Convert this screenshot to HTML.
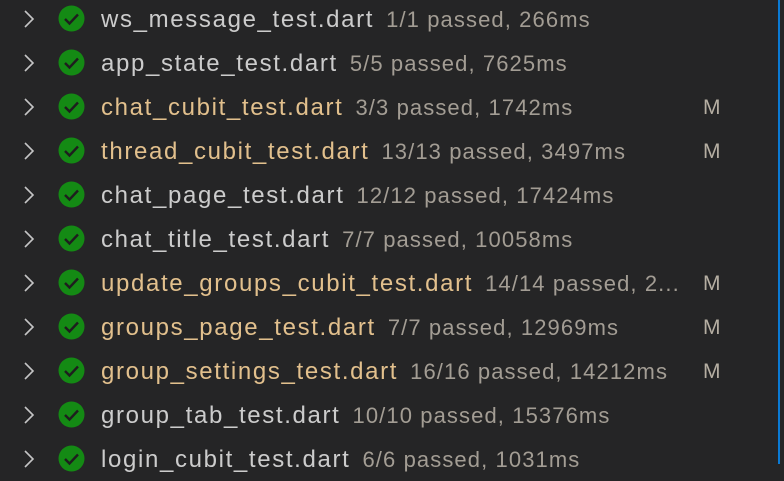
<!DOCTYPE html>
<html><head><style>
body{margin:0;width:784px;height:464px;background:#252526;overflow:hidden;font-family:"Liberation Sans",sans-serif;position:relative}
.r{position:absolute;left:0;width:778px;height:44px}
.chev{position:absolute;left:22px;top:12px}
.ic{position:absolute;left:58px;top:8px}
.t{position:absolute;left:101px;top:9px;font-size:24px;letter-spacing:1.65px;white-space:nowrap;color:#cccccc;line-height:28px}
.t.m{color:#e2c08d}
.d{color:#a39d94;margin-left:12px;font-size:22px;letter-spacing:1.1px}
.M{position:absolute;left:703px;top:9px;font-size:21px;color:#b5aea2;line-height:28px}
.bar{position:absolute;left:778px;top:0;width:2px;height:464px;background:#0a7ad4}
</style></head><body>
<div class="bar"></div>
<div id="c"></div>
<script>
var rows=[["ws_message_test.dart","1/1 passed, 266ms",0],["app_state_test.dart","5/5 passed, 7625ms",0],["chat_cubit_test.dart","3/3 passed, 1742ms",1],["thread_cubit_test.dart","13/13 passed, 3497ms",1],["chat_page_test.dart","12/12 passed, 17424ms",0],["chat_title_test.dart","7/7 passed, 10058ms",0],["update_groups_cubit_test.dart","14/14 passed, 2...",1],["groups_page_test.dart","7/7 passed, 12969ms",1],["group_settings_test.dart","16/16 passed, 14212ms",1],["group_tab_test.dart","10/10 passed, 15376ms",0],["login_cubit_test.dart","6/6 passed, 1031ms",0]];
var h="";rows.forEach(function(r,i){var y=-3+i*44;
h+='<div class="r" style="top:'+y+'px"><svg class="chev" width="14" height="20"><path d="M3 2 L11 10 L3 18" fill="none" stroke="#c5c5c5" stroke-width="1.6"/></svg><svg class="ic" width="27" height="27"><circle cx="13.5" cy="13.5" r="13" fill="#148a14"/><path d="M7 14 L11.5 18.5 L20 9.5" fill="none" stroke="#1e1e1e" stroke-width="2.4"/></svg><div class="t'+(r[2]?' m':'')+'">'+r[0]+'<span class="d">'+r[1]+'</span></div>'+(r[2]?'<div class="M">M</div>':'')+'</div>';});
document.getElementById("c").innerHTML=h;
</script>
</body></html>
